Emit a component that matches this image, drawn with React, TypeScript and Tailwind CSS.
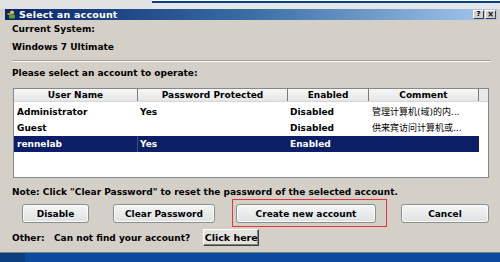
import React from "react";

const columns = [
  { label: "User Name", w: "w-[124px]" },
  { label: "Password Protected", w: "w-[150px]" },
  { label: "Enabled", w: "w-[81px]" },
  { label: "Comment", w: "w-[110px]" },
];

const accounts = [
  { name: "Administrator", prot: "Yes", enabled: "Disabled", comment: "管理计算机(域)的内..." },
  { name: "Guest", prot: "", enabled: "Disabled", comment: "供来宾访问计算机或..." },
  { name: "rennelab", prot: "Yes", enabled: "Enabled", comment: "", selected: true },
];

function WinButton({ label, w }: { label: string; w: string }) {
  return (
    <div
      className={`${w} h-[19px] flex items-center justify-center rounded-[3px] border border-[#8a8f8e] bg-gradient-to-b from-[#f4f6f6] to-[#dde2e1] shadow-[inset_0_0_0_1px_#fbfbfb]`}
    >
      {label}
    </div>
  );
}

export default function App() {
  return (
    <div className="w-[500px] h-[262px] bg-[#d4d0c8] overflow-hidden flex flex-col font-['DejaVu_Sans','Noto_Sans_CJK_SC',sans-serif] text-[9px] font-bold text-black leading-[12px]">
      {/* strip above the window */}
      <div className="h-[9px] flex shrink-0">
        <div className="w-[152px] bg-[#e2e2e2]" />
        <div className="flex-1 flex flex-col">
          <div className="h-[1px] bg-white" />
          <div className="h-[2px] bg-[#0a3f8c]" />
          <div className="flex-1 bg-[#e6e6e6]" />
        </div>
      </div>

      <div className="flex-1 flex flex-col pl-[5px] pr-[3px]">
        {/* title bar */}
        <div className="h-[11px] flex items-center bg-gradient-to-r from-[#0a246a] via-[#3a6ea5] to-[#a6caf0] pl-[2px] pr-[1px]">
          <svg width="9" height="9" viewBox="0 0 9 9" className="mr-[3px]">
            <circle cx="5" cy="2.5" r="2" fill="#e8c23a" />
            <rect x="2" y="4.5" width="6" height="4" rx="1" fill="#5aa02c" />
            <rect x="0.5" y="3" width="3" height="2" fill="#c58a2a" />
          </svg>
          <span className="text-white text-[9.5px] leading-[10px] tracking-[0.2px]">Select an account</span>
          <div className="flex-1" />
          <div className="w-[11px] h-[9px] bg-[#d4d0c8] border border-t-white border-l-white border-b-[#404040] border-r-[#404040] text-[7px] leading-[7px] flex items-center justify-center mr-[1px]">
            ?
          </div>
          <div className="w-[11px] h-[9px] bg-[#d4d0c8] border border-t-white border-l-white border-b-[#404040] border-r-[#404040] text-[8px] leading-[7px] flex items-center justify-center">
            ×
          </div>
        </div>

        <div className="flex flex-col pl-[7px] pr-[6px]">
          <div className="mt-[3px]">Current System:</div>
          <div className="mt-[6px]">Windows 7 Ultimate</div>
          <div className="mt-[7px] h-[2px] border-t border-t-[#a0a0a0] border-b border-b-white" />
          <div className="mt-[5px]">Please select an account to operate:</div>

          {/* account list */}
          <div className="mt-[9px] ml-[1px] w-[476px] h-[90px] bg-white border border-[#828790] flex flex-col">
            <div className="h-[13px] flex bg-gradient-to-b from-[#f7f7f7] to-[#e6e6e6] border-b border-[#d5d5d5]">
              {columns.map((c) => (
                <div
                  key={c.label}
                  className={`${c.w} flex items-center justify-center border-r border-[#7a7a7a]`}
                >
                  {c.label}
                </div>
              ))}
              <div className="flex-1 bg-[#e9e9e9]" />
            </div>
            <div className="pt-[2px] flex flex-col">
              {accounts.map((a) => (
                <div
                  key={a.name}
                  className={`h-[16px] w-[465px] flex items-center ${
                    a.selected ? "bg-[#0c1f66] text-white" : ""
                  }`}
                >
                  <div className={`w-[124px] pl-[3px] h-full flex items-center ${a.selected ? "border-r border-[#3c4f8c]" : ""}`}>
                    {a.name}
                  </div>
                  <div className="w-[150px] pl-[2px]">{a.prot}</div>
                  <div className="w-[81px] pl-[2px]">{a.enabled}</div>
                  <div className="w-[110px] pl-[3px] font-normal text-[9px] whitespace-nowrap overflow-hidden">
                    {a.comment}
                  </div>
                </div>
              ))}
            </div>
          </div>

          <div className="mt-[8px] whitespace-nowrap">
            Note: Click "Clear Password" to reset the password of the selected account.
          </div>

          {/* buttons */}
          <div className="mt-[6px] h-[19px] flex items-center">
            <div className="ml-[10px]">
              <WinButton label="Disable" w="w-[67px]" />
            </div>
            <div className="ml-[24px]">
              <WinButton label="Clear Password" w="w-[102px]" />
            </div>
            <div className="ml-[21px] relative">
              <WinButton label="Create new account" w="w-[140px]" />
              <div className="absolute left-[-4px] top-[-5px] w-[155px] h-[28px] border border-[#e8353a] pointer-events-none" />
            </div>
            <div className="ml-[25px]">
              <WinButton label="Cancel" w="w-[88px]" />
            </div>
          </div>

          {/* other */}
          <div className="mt-[6px] h-[17px] flex items-center whitespace-nowrap">
            <span className="w-[42px]">Other:</span>
            <span>Can not find your account?</span>
            <div className="ml-[13px] w-[56px] h-[17px] bg-[#e4e2dc] border border-t-white border-l-white border-b-[#404040] border-r-[#404040] shadow-[inset_-1px_-1px_0_#808080] flex items-center justify-center text-[9.5px]">
              Click here
            </div>
          </div>
        </div>
      </div>

      {/* bottom edge */}
      <div className="h-[1px] bg-[#808080] shrink-0" />
      <div className="h-[9px] bg-[#0b4a9c] shrink-0 flex">
        <div className="w-[25px] bg-[#0a3f80]" />
      </div>
    </div>
  );
}
